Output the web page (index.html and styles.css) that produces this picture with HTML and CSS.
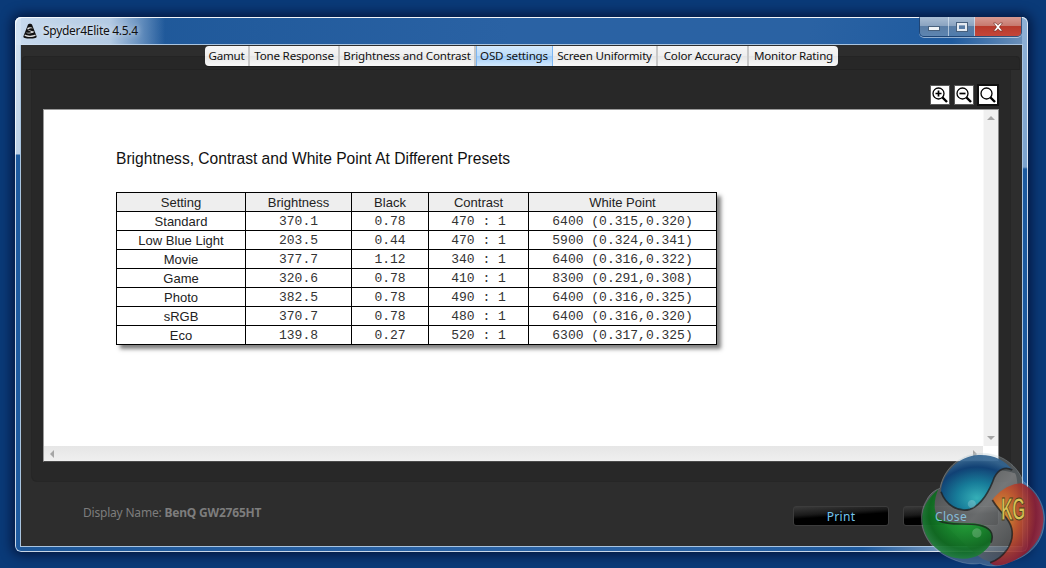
FILE: index.html
```html
<!DOCTYPE html>
<html lang="en">
<head>
<meta charset="utf-8">
<title>Spyder4Elite 4.5.4</title>
<link rel="stylesheet" href="styles.css">
</head>
<body>
<div class="window">
  <header class="titlebar">
    <svg class="app-icon" viewBox="0 0 16 16" width="16" height="16" aria-hidden="true">
      <path d="M6 1.5 C6.5 .5 9.5 .5 10 1.5 L14.5 13 C15.5 15 12 15.5 8 15.5 C4 15.5 .5 15 1.5 13 Z" fill="#111"/>
      <path d="M5.3 5 C7 3.8 9.5 4 11 5.2 C9.5 5 7 5.2 5.8 6.4 C7.5 7.6 10 7.6 12.4 8.8 C10.5 10.6 6 10.8 3.5 9.8 C6 9.8 8.6 9.8 9.8 8.9 C7.5 8.2 5.2 7.2 5.3 5 Z" fill="#eee"/>
      <path d="M3 11.6 C5.5 13 10.5 13 13.2 11.6 L13.8 12.8 C10.5 14.4 5.5 14.4 2.4 12.8 Z" fill="#ddd"/>
    </svg>
    <span class="title">Spyder4Elite 4.5.4</span>
    <div class="controls">
      <span class="ctl ctl-min"><i class="glyph-min"></i></span>
      <span class="ctl ctl-max"><i class="glyph-max"></i></span>
      <span class="ctl ctl-close">
        <svg viewBox="0 0 12 10" width="12" height="10" aria-hidden="true"><path d="M1.5 1 L4 1 L6 3.2 L8 1 L10.5 1 L7.4 5 L10.5 9 L8 9 L6 6.8 L4 9 L1.5 9 L4.6 5 Z" fill="#fff" stroke="#6b2a22" stroke-width=".6"/></svg>
      </span>
    </div>
  </header>

  <main class="client">
    <nav class="tabhead">
      <div class="tabs">
        <span class="tab tab-1">Gamut</span>
        <span class="tab tab-2">Tone Response</span>
        <span class="tab tab-3">Brightness and Contrast</span>
        <span class="tab tab-4 tab-active">OSD settings</span>
        <span class="tab tab-5">Screen Uniformity</span>
        <span class="tab tab-6">Color Accuracy</span>
        <span class="tab tab-7">Monitor Rating</span>
      </div>
    </nav>

    <section class="panel">
      <div class="toolbar">
        <span class="zoom-btn">
          <svg viewBox="0 0 18 18" width="18" height="18" aria-hidden="true"><circle cx="7.5" cy="7.5" r="5.5" fill="none" stroke="#000" stroke-width="1.3"/><path d="M11.5 11.5 L16 16" stroke="#000" stroke-width="2.4"/><path d="M4.5 7.5 H10.5 M7.5 4.5 V10.5" stroke="#000" stroke-width="1.7"/></svg>
        </span>
        <span class="zoom-btn">
          <svg viewBox="0 0 18 18" width="18" height="18" aria-hidden="true"><circle cx="7.5" cy="7.5" r="5.5" fill="none" stroke="#000" stroke-width="1.3"/><path d="M11.5 11.5 L16 16" stroke="#000" stroke-width="2.4"/><path d="M4.5 7.5 H10.5" stroke="#000" stroke-width="1.7"/></svg>
        </span>
        <span class="zoom-btn zoom-btn-focus">
          <svg viewBox="0 0 18 18" width="18" height="18" aria-hidden="true"><circle cx="7.5" cy="7.5" r="5.5" fill="none" stroke="#000" stroke-width="1.3"/><path d="M11.5 11.5 L16 16" stroke="#000" stroke-width="2.4"/></svg>
        </span>
      </div>

      <div class="viewer">
        <div class="viewer-main">
          <div class="page">
            <h1 class="report-title">Brightness, Contrast and White Point At Different Presets</h1>
            <table class="report">
              <thead>
                <tr><th class="c1">Setting</th><th class="c2">Brightness</th><th class="c3">Black</th><th class="c4">Contrast</th><th class="c5">White Point</th></tr>
              </thead>
              <tbody>
                <tr><td class="name">Standard</td><td>370.1</td><td>0.78</td><td>470 : 1</td><td>6400 (0.315,0.320)</td></tr>
                <tr><td class="name">Low Blue Light</td><td>203.5</td><td>0.44</td><td>470 : 1</td><td>5900 (0.324,0.341)</td></tr>
                <tr><td class="name">Movie</td><td>377.7</td><td>1.12</td><td>340 : 1</td><td>6400 (0.316,0.322)</td></tr>
                <tr><td class="name">Game</td><td>320.6</td><td>0.78</td><td>410 : 1</td><td>8300 (0.291,0.308)</td></tr>
                <tr><td class="name">Photo</td><td>382.5</td><td>0.78</td><td>490 : 1</td><td>6400 (0.316,0.325)</td></tr>
                <tr><td class="name">sRGB</td><td>370.7</td><td>0.78</td><td>480 : 1</td><td>6400 (0.316,0.320)</td></tr>
                <tr><td class="name">Eco</td><td>139.8</td><td>0.27</td><td>520 : 1</td><td>6300 (0.317,0.325)</td></tr>
              </tbody>
            </table>
          </div>
          <div class="vscroll">
            <i class="arrow arrow-up"></i>
            <i class="arrow arrow-down"></i>
          </div>
        </div>
        <div class="hrow">
          <div class="hscroll">
            <i class="arrow arrow-left"></i>
            <i class="arrow arrow-right"></i>
          </div>
          <div class="corner"></div>
        </div>
      </div>
    </section>

    <footer class="footer">
      <p class="display-name">Display Name: <b>BenQ GW2765HT</b></p>
      <div class="actions">
        <span class="action">Print</span>
        <span class="action"><span class="action-under-logo">Close</span></span>
      </div>
    </footer>
  </main>
</div>

<svg class="logo" viewBox="0 0 393 354" width="131" height="118" aria-hidden="true">
  <defs>
    <radialGradient id="teal" cx="50%" cy="78%" r="70%">
      <stop offset="0" stop-color="#2fb6bf"/><stop offset=".4" stop-color="#0f7f9f"/><stop offset=".8" stop-color="#0a3f78"/><stop offset="1" stop-color="#2f6290"/>
    </radialGradient>
    <radialGradient id="green" cx="62%" cy="34%" r="70%">
      <stop offset="0" stop-color="#6fae7c"/><stop offset=".28" stop-color="#179a2e"/><stop offset=".75" stop-color="#0a6a1c"/><stop offset="1" stop-color="#278544"/>
    </radialGradient>
    <radialGradient id="red" cx="22%" cy="38%" r="80%">
      <stop offset="0" stop-color="#e3a02e"/><stop offset=".4" stop-color="#c4532a"/><stop offset=".8" stop-color="#8a1a30"/><stop offset="1" stop-color="#9c3044"/>
    </radialGradient>
    <linearGradient id="metal" x1="0" y1="0" x2="1" y2="1">
      <stop offset="0" stop-color="#3a3a3a"/><stop offset=".5" stop-color="#8a8a8a"/><stop offset="1" stop-color="#3a3a3a"/>
    </linearGradient>
  </defs>
  <path class="logo-halo" d="M190 10 C260 5 310 50 325 95 C365 120 392 170 388 215 C385 280 340 320 285 335 C260 350 220 352 195 340 C150 350 80 320 50 285 C15 245 10 190 35 150 C45 130 60 120 75 115 C85 60 130 15 190 10 Z"/>
  <path class="logo-metal" fill="url(#metal)" d="M75 115 C120 60 250 50 300 70 C320 95 300 320 240 335 C190 345 120 240 60 200 C50 170 60 130 75 115 Z"/>
  <path class="logo-part" fill="url(#teal)" d="M78 125 C82 65 135 17 190 15 C235 13 270 30 292 60 C270 48 250 58 238 82 C225 120 200 165 165 178 C130 188 92 165 78 125 Z"/>
  <path class="logo-part" fill="url(#green)" d="M70 118 C52 135 24 160 22 200 C20 245 48 295 100 318 C160 340 210 315 228 278 C240 245 222 228 190 222 C150 215 100 225 72 205 C52 185 58 145 70 118 Z"/>
  <path class="logo-part" fill="url(#red)" d="M320 100 C365 120 388 170 385 215 C380 280 330 322 270 343 C245 350 232 345 225 338 C265 325 300 280 290 235 C282 200 255 190 232 150 C250 125 285 100 320 100 Z"/>
  <path class="logo-edge" d="M292 60 C270 48 250 58 238 82 C225 120 200 165 165 178 C130 188 92 165 78 125 M72 212 C100 228 150 218 190 225 C222 231 240 248 228 278 M232 150 C255 190 282 200 290 235 C300 280 265 325 225 338"/>
  <path class="logo-shine" d="M170 150 a12 12 0 1 0 1 0 Z M185 235 a14 14 0 1 0 1 0 Z"/>
  <text class="logo-text" transform="translate(258 210) scale(1 1.9)">KG</text>
</svg>
</body>
</html>
```
FILE: styles.css
```css
html, body {
  margin: 0;
  padding: 0;
}

body {
  width: 1046px;
  height: 568px;
  overflow: hidden;
  position: relative;
  background: #0a3a78;
  font-family: "Noto Sans", "Open Sans", sans-serif;
}

.window {
  box-sizing: border-box;
  width: 1013px;
  height: 535px;
  margin: 17px 0 0 15px;
  padding: 0 6px 6px;
  display: flex;
  flex-direction: column;
  border-radius: 6px;
  background:
    linear-gradient(180deg, #d5e3f1 0, #bcd0e6 137px, #1d5a9f 138px) left top / 6px 100% no-repeat,
    linear-gradient(180deg, #8fb1d6 0, #7ba2cd 150px, #1d5a9f 152px) right top / 6px 100% no-repeat,
    linear-gradient(100deg, #1b5596 0, #2a62a4 45%, #2a62a3 72%, #1f5b9f 85%, #7e9dc0 93%, #4a79af 100%);
  box-shadow:
    inset 0 0 0 1px rgba(255, 255, 255, .75),
    0 0 12px 3px rgba(0, 10, 40, .75);
}

.titlebar {
  position: relative;
  height: 28px;
  flex: none;
  display: flex;
  align-items: flex-start;
  margin: 0 -6px;
  padding: 5px 0 0 7px;
  box-sizing: border-box;
  background: linear-gradient(90deg, rgba(210, 226, 243, .95) 0, rgba(205, 222, 240, .85) 95px, rgba(190, 212, 236, .5) 122px, rgba(190, 212, 236, 0) 150px);
  border-radius: 6px 6px 0 0;
  box-shadow: inset 1px 1px 0 rgba(255, 255, 255, .75);
}

.app-icon {
  flex: none;
  margin-top: 1px;
}

.title {
  margin-left: 5px;
  font-size: 12px;
  letter-spacing: -.28px;
  line-height: 17px;
  color: #111;
  text-shadow: 0 0 6px rgba(255, 255, 255, .9);
}

.controls {
  margin-left: auto;
  margin-top: -5px;
  margin-right: 6px;
  display: flex;
  height: 19px;
  border: 1px solid rgba(30, 60, 100, .7);
  border-top: 0;
  border-radius: 0 0 5px 5px;
  box-shadow: 0 1px 0 rgba(255, 255, 255, .5);
  overflow: hidden;
}

.ctl {
  display: flex;
  align-items: center;
  justify-content: center;
  box-sizing: border-box;
  height: 100%;
  border-right: 1px solid rgba(230, 240, 250, .6);
}

.ctl-min {
  width: 29px;
  background: linear-gradient(180deg, #a9bdd4 0, #8ba4c1 45%, #5a7da5 50%, #5d85b1 100%);
}

.ctl-max {
  width: 26px;
  background: linear-gradient(180deg, #a9bdd4 0, #8ba4c1 45%, #5a7da5 50%, #4f7cad 100%);
}

.ctl-close {
  width: 46px;
  border-right: 0;
  background: linear-gradient(180deg, #d89a92 0, #c77a70 45%, #b83a2c 50%, #c4463a 100%);
}

.glyph-min {
  display: block;
  width: 10px;
  height: 3px;
  margin-top: 4px;
  background: #eef2f6;
  border: 1px solid #47607d;
}

.glyph-max {
  display: block;
  box-sizing: border-box;
  width: 10px;
  height: 8px;
  border: 2px solid #e4eaf1;
  outline: 1px solid #47607d;
}

.client {
  flex: 1;
  min-height: 0;
  display: flex;
  flex-direction: column;
  background: #2d2d2d;
  box-shadow: 0 0 0 1px #a9c4e0;
}

.tabhead {
  position: relative;
  height: 25px;
  flex: none;
  box-sizing: border-box;
  padding: 1px 0 0 184px;
}

.tabhead::before {
  content: "";
  position: absolute;
  left: 1px;
  right: 2px;
  top: 11px;
  bottom: 0;
  background: #272727;
  border: 1px solid #242424;
  border-bottom-color: #222;
  box-sizing: border-box;
  border-radius: 4px 4px 0 0;
}

.tabs {
  position: relative;
  display: flex;
  width: 633px;
  height: 20px;
  border-radius: 4px;
  box-shadow: 0 1px 0 #1c1c1c;
  overflow: hidden;
}

.tab {
  display: block;
  box-sizing: border-box;
  height: 20px;
  font-size: 11.6px;
  letter-spacing: -.2px;
  line-height: 19px;
  color: #111;
  text-align: center;
  white-space: nowrap;
  background: linear-gradient(180deg, #f6f6f6 0, #efefef 50%, #e6e6e6 50%, #f8f8f8 100%);
  border-right: 2px solid #c8c8c8;
}

.tab-1 { width: 45px; }
.tab-2 { width: 90px; }
.tab-3 { width: 136px; }
.tab-4 { width: 77px; }
.tab-5 { width: 105px; }
.tab-6 { width: 91px; }
.tab-7 { width: 89px; border-right: 0; }

.tab-active {
  background: linear-gradient(180deg, #d5e9fc 0, #bcdcfa 50%, #9dcbf8 50%, #d3e8fc 100%);
  border-right: 1px solid #7cb6f2;
  box-shadow: inset 1px 0 0 #7cb6f2;
}

.panel {
  box-sizing: border-box;
  flex: none;
  height: 411px;
  margin: 0 12px 0 11px;
  padding: 16px 11px 0;
  background: #282828;
  border-radius: 0 0 5px 5px;
  box-shadow: 0 0 0 1px #262626;
}

.toolbar {
  display: flex;
  justify-content: flex-end;
  gap: 6px;
  height: 18px;
  padding-right: 2px;
  margin-bottom: 5px;
}

.zoom-btn {
  display: block;
  width: 18px;
  height: 18px;
  background: #fff;
  box-shadow: 0 0 0 1px #5a5a5a;
}

.zoom-btn svg {
  display: block;
}

.zoom-btn-focus {
  box-shadow: 0 0 0 2px #111;
}

.viewer {
  box-sizing: border-box;
  height: 353px;
  display: flex;
  flex-direction: column;
  background: #fff;
  border: 1px solid #9a9a9a;
  border-bottom-color: #4a4a4a;
  border-right-color: #8a8a8a;
}

.viewer-main {
  flex: 1;
  min-height: 0;
  display: flex;
}

.page {
  flex: 1;
  padding: 40px 0 0 72px;
}

.report-title {
  margin: 0 0 24px;
  font: 400 15.6px/18px "Liberation Sans", Arial, sans-serif;
  color: #111;
}

.report {
  border-collapse: collapse;
  table-layout: fixed;
  width: 600px;
  font: 13px/17px "Liberation Mono", monospace;
  color: #333;
  box-shadow: 4px 4px 4px rgba(60, 60, 60, .65);
}

.report th,
.report td {
  box-sizing: border-box;
  height: 19px;
  padding: 0;
  border: 1px solid #000;
  text-align: center;
  white-space: nowrap;
}

.report th,
.report td.name {
  font: 400 13px/17px "Liberation Sans", Arial, sans-serif;
  color: #222;
}

.report th {
  background: #eee;
}

.c1 { width: 129px; }
.c2 { width: 106px; }
.c3 { width: 77px; }
.c4 { width: 100px; }
.c5 { width: 188px; }

.vscroll {
  position: relative;
  flex: none;
  width: 15px;
  background: #f0f0f0;
  box-shadow: inset 1px 0 0 #f8f8f8;
}

.hrow {
  flex: none;
  display: flex;
  height: 15px;
}

.hscroll {
  position: relative;
  flex: 1;
  background: linear-gradient(180deg, #e6e6e6 0, #efefef 100%);
}

.corner {
  width: 15px;
  background: #fff;
}

.arrow {
  position: absolute;
  width: 0;
  height: 0;
  border-style: solid;
  border-color: transparent;
}

.arrow-up {
  top: 6px;
  left: 4px;
  border-width: 0 4px 4px;
  border-bottom-color: #a6a6a6;
}

.arrow-down {
  bottom: 6px;
  left: 4px;
  border-width: 4px 4px 0;
  border-top-color: #a6a6a6;
}

.arrow-left {
  left: 6px;
  top: 4px;
  border-width: 4px 4px 4px 0;
  border-right-color: #a6a6a6;
}

.arrow-right {
  right: 6px;
  top: 4px;
  border-width: 4px 0 4px 4px;
  border-left-color: #a6a6a6;
}

.footer {
  flex: 1;
  display: flex;
  justify-content: space-between;
  padding: 25px 23px 0 62px;
}

.display-name {
  margin: 0;
  font-size: 12px;
  letter-spacing: -.2px;
  line-height: 14px;
  color: #7d7d7d;
}

.display-name b {
  font-weight: 700;
}

.actions {
  display: flex;
  gap: 14px;
}

.action {
  display: block;
  box-sizing: border-box;
  width: 96px;
  height: 20px;
  text-align: center;
  font-size: 12px;
  letter-spacing: .3px;
  line-height: 19px;
  color: #72c4ee;
  background: linear-gradient(176deg, #3a3a3a 0, #1a1a1a 35%, #000 50%, #000 100%);
  border: 1px solid #3c3c3c;
  border-radius: 3px;
}

.action-under-logo {
  position: relative;
  z-index: 2;
  color: #86bcd8;
}

.logo {
  position: absolute;
  left: 915px;
  top: 450px;
}

.logo-halo {
  fill: rgba(170, 190, 200, .3);
  stroke: rgba(210, 225, 230, .35);
  stroke-width: 2;
}

.logo-metal {
  opacity: .62;
}

.logo-part {
  opacity: .9;
}

.logo-edge {
  fill: none;
  stroke: rgba(30, 30, 30, .75);
  stroke-width: 5;
}

.logo-shine {
  fill: rgba(255, 255, 255, .2);
}

.logo-text {
  font: 700 50px "Liberation Sans", Arial, sans-serif;
  fill: #d8c255;
  stroke: #4a3c18;
  stroke-width: 1.5;
  letter-spacing: -2px;
}
```
